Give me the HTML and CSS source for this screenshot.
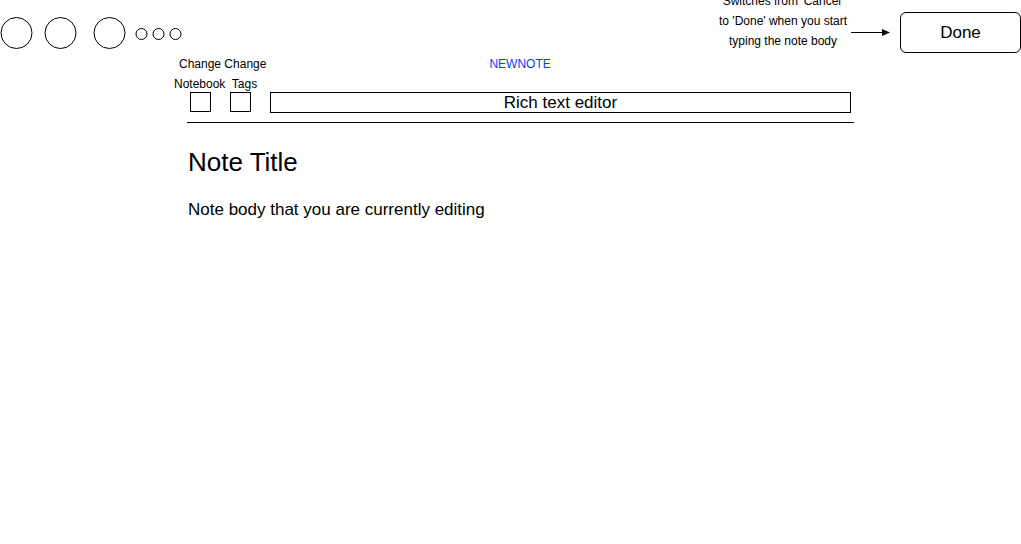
FILE: index.html
```html
<!DOCTYPE html>
<html lang="en">
<head>
<meta charset="utf-8">
<title>New Note</title>
<link rel="stylesheet" href="styles.css">
</head>
<body>
<header class="topbar">
  <svg class="dots" width="182" height="50" viewBox="0 0 182 50" aria-hidden="true">
    <g fill="none" stroke="#000" stroke-width="1">
      <circle cx="16.5" cy="33" r="15.5"/>
      <circle cx="60.5" cy="33" r="15.5"/>
      <circle cx="109.5" cy="33" r="15.5"/>
      <circle cx="141.5" cy="34" r="5.5"/>
      <circle cx="158.5" cy="34" r="5.5"/>
      <circle cx="175.5" cy="34" r="5.5"/>
    </g>
  </svg>
  <div class="spacer"></div>
  <p class="note-annotation">Switches from 'Cancel'<br>to 'Done' when you start<br>typing the note body</p>
  <svg class="arrow" width="40" height="10" viewBox="0 0 40 10" aria-hidden="true">
    <line x1="0" y1="5.5" x2="34" y2="5.5" stroke="#000" stroke-width="1"/>
    <path d="M31 2 L39 5.5 L31 9 Z" fill="#000"/>
  </svg>
  <button class="done-btn">Done</button>
</header>

<section class="toolbar">
  <div class="row-one">
    <span class="lbl-change">Change Change</span>
    <span class="newnote">NEWNOTE</span>
  </div>
  <div class="row-two"><span class="lbl-names">Notebook&nbsp; Tags</span></div>
  <div class="controls">
    <span class="check"></span>
    <span class="check"></span>
    <div class="rte">Rich text editor</div>
  </div>
  <div class="divider"></div>
</section>

<main class="note">
  <h1 class="note-title">Note Title</h1>
  <p class="note-body">Note body that you are currently editing</p>
</main>
</body>
</html>
```

FILE: styles.css
```css
html, body {
  margin: 0;
  padding: 0;
  background: #fff;
}

body {
  font-family: "Liberation Sans", Arial, Helvetica, sans-serif;
  color: #000;
  width: 1021px;
  height: 544px;
  overflow: hidden;
}

.topbar {
  display: flex;
  align-items: flex-start;
  height: 54px;
}

.dots {
  display: block;
  flex: none;
}

.spacer {
  flex: 1;
}

.note-annotation {
  width: 136px;
  margin: -9px 0 0 0;
  font-size: 12px;
  line-height: 20px;
  text-align: center;
}

.arrow {
  display: block;
  flex: none;
  margin-top: 27px;
}

.done-btn {
  flex: none;
  margin: 12px 0 0 9px;
  width: 121px;
  height: 41px;
  box-sizing: border-box;
  border: 1px solid #000;
  border-radius: 6px;
  background: #fff;
  font-family: inherit;
  font-size: 17px;
  color: #000;
  padding: 0;
}

.toolbar {
  font-size: 12px;
}

.row-one {
  display: flex;
  height: 20px;
  line-height: 20px;
}

.lbl-change {
  margin-left: 179px;
}

.newnote {
  margin-left: 223px;
  color: #0a3cff;
}

.row-two {
  height: 18px;
  line-height: 21px;
  padding-left: 174px;
  white-space: pre;
}

.controls {
  display: flex;
  align-items: flex-start;
  padding-left: 190px;
  height: 21px;
}

.check {
  width: 21px;
  height: 20px;
  box-sizing: border-box;
  border: 1px solid #000;
  margin-right: 19px;
}

.rte {
  width: 581px;
  height: 21px;
  box-sizing: border-box;
  border: 1px solid #000;
  font-size: 17px;
  line-height: 19px;
  text-align: center;
}

.divider {
  margin: 9px 0 0 187px;
  width: 667px;
  height: 1px;
  background: #000;
}

.note {
  padding-left: 188px;
  padding-top: 24px;
}

.note-title {
  margin: 0;
  font-size: 26px;
  font-weight: normal;
  line-height: 30px;
}

.note-body {
  margin: 23px 0 0 0;
  font-size: 17px;
  line-height: 20px;
}
```
